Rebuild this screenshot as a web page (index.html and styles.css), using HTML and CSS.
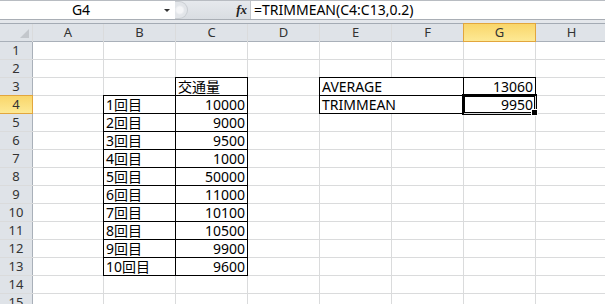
FILE: index.html
```html
<!DOCTYPE html>
<html lang="ja">
<head>
  <meta charset="UTF-8">
  <title>TRIMMEAN</title>
  <link rel="stylesheet" href="styles.css">
</head>
<body>
  <div class="fbar">
    <div class="namebox">G4</div>
    <span class="drop"></span>
    <div class="fx-area">
      <span class="grip"></span>
      <span class="fx">fx</span>
    </div>
    <div class="formula">=TRIMMEAN(C4:C13,0.2)</div>
  </div>
  <div class="strip"></div>

  <div class="sheet">
    <div class="hd corner"></div>
    <div class="hd">A</div><div class="hd">B</div><div class="hd">C</div><div class="hd">D</div>
    <div class="hd">E</div><div class="hd">F</div><div class="hd sel">G</div><div class="hd">H</div>

    <div class="rh">1</div><div class="c"></div><div class="c"></div><div class="c"></div><div class="c"></div><div class="c"></div><div class="c"></div><div class="c"></div><div class="c"></div>
    <div class="rh">2</div><div class="c"></div><div class="c"></div><div class="c"></div><div class="c"></div><div class="c"></div><div class="c"></div><div class="c"></div><div class="c"></div>
    <div class="rh">3</div><div class="c"></div><div class="c"></div><div class="c b">交通量</div><div class="c"></div><div class="c b span2">AVERAGE</div><div class="c b num">13060</div><div class="c"></div>
    <div class="rh sel">4</div><div class="c"></div><div class="c b">1回目</div><div class="c b num">10000</div><div class="c"></div><div class="c b span2">TRIMMEAN</div><div class="c b num active">9950<span class="handle"></span></div><div class="c"></div>
    <div class="rh">5</div><div class="c"></div><div class="c b">2回目</div><div class="c b num">9000</div><div class="c"></div><div class="c"></div><div class="c"></div><div class="c"></div><div class="c"></div>
    <div class="rh">6</div><div class="c"></div><div class="c b">3回目</div><div class="c b num">9500</div><div class="c"></div><div class="c"></div><div class="c"></div><div class="c"></div><div class="c"></div>
    <div class="rh">7</div><div class="c"></div><div class="c b">4回目</div><div class="c b num">1000</div><div class="c"></div><div class="c"></div><div class="c"></div><div class="c"></div><div class="c"></div>
    <div class="rh">8</div><div class="c"></div><div class="c b">5回目</div><div class="c b num">50000</div><div class="c"></div><div class="c"></div><div class="c"></div><div class="c"></div><div class="c"></div>
    <div class="rh">9</div><div class="c"></div><div class="c b">6回目</div><div class="c b num">11000</div><div class="c"></div><div class="c"></div><div class="c"></div><div class="c"></div><div class="c"></div>
    <div class="rh">10</div><div class="c"></div><div class="c b">7回目</div><div class="c b num">10100</div><div class="c"></div><div class="c"></div><div class="c"></div><div class="c"></div><div class="c"></div>
    <div class="rh">11</div><div class="c"></div><div class="c b">8回目</div><div class="c b num">10500</div><div class="c"></div><div class="c"></div><div class="c"></div><div class="c"></div><div class="c"></div>
    <div class="rh">12</div><div class="c"></div><div class="c b">9回目</div><div class="c b num">9900</div><div class="c"></div><div class="c"></div><div class="c"></div><div class="c"></div><div class="c"></div>
    <div class="rh">13</div><div class="c"></div><div class="c b">10回目</div><div class="c b num">9600</div><div class="c"></div><div class="c"></div><div class="c"></div><div class="c"></div><div class="c"></div>
    <div class="rh">14</div><div class="c"></div><div class="c"></div><div class="c"></div><div class="c"></div><div class="c"></div><div class="c"></div><div class="c"></div><div class="c"></div>
    <div class="rh">15</div><div class="c"></div><div class="c"></div><div class="c"></div><div class="c"></div><div class="c"></div><div class="c"></div><div class="c"></div><div class="c"></div>
  </div>
</body>
</html>
```

FILE: styles.css
```css
html, body {
  margin: 0;
  padding: 0;
  overflow: hidden;
  background: #fff;
  font-family: "Noto Sans", "Noto Sans CJK JP", sans-serif;
  color: #000;
}
.fbar {
  display: flex;
  height: 18px;
  border-top: 1px solid #b8bcc2;
  border-bottom: 1px solid #a9aeb5;
  background: #fff;
  font-size: 14px;
  line-height: 18px;
}
.namebox {
  width: 162px;
  text-align: center;
}
.drop {
  width: 0;
  height: 0;
  margin: 8px 6px 0 2px;
  border-left: 3px solid transparent;
  border-right: 3px solid transparent;
  border-top: 3px solid #333;
}
.fx-area {
  width: 74px;
  display: flex;
  justify-content: space-between;
  align-items: center;
  background: linear-gradient(#e6e9ed, #d9dde2);
  border-right: 1px solid #c4c8cd;
}
.grip {
  width: 12px;
  height: 16px;
  margin-left: -1px;
  border: 1px solid #c9cdd2;
  border-left: none;
  border-radius: 0 9px 9px 0;
  background: radial-gradient(circle at 40% 50%, #f4f5f7 3px, #e2e5e9 5px);
}
.fx {
  font-family: "Liberation Serif", serif;
  font-style: italic;
  font-weight: bold;
  font-size: 13px;
  color: #222;
  margin-right: 3px;
}
.formula {
  padding-left: 3px;
}
.strip {
  height: 3px;
  background: #e4e7eb;
  border-bottom: 1px solid #a4abb4;
}
.sheet {
  display: grid;
  grid-template-columns: 32px 70px repeat(7, 71px);
  grid-auto-rows: 17px;
  gap: 1px;
  background: #dadbdc;
  font-size: 14px;
  line-height: 17px;
}
.hd, .rh {
  background: #dfe3e8;
  color: #333;
  font-size: 13px;
  text-align: center;
}
.hd {
  box-shadow: 0 1px 0 #a9b0b9;
}
.rh {
  box-shadow: 1px 0 0 #a9b0b9;
}
.corner {
  position: relative;
}
.corner::after {
  content: "";
  position: absolute;
  right: 3px;
  bottom: 3px;
  border-left: 9px solid transparent;
  border-bottom: 9px solid #c3c7cc;
}
.hd.sel, .rh.sel {
  background: linear-gradient(#f9d66a, #fde995);
  box-shadow: 0 0 0 1px #e2a63d;
  position: relative;
  z-index: 1;
}
.c {
  background: #fff;
  padding: 0 2px;
  white-space: nowrap;
}
.b {
  outline: 1px solid #000;
}
.num {
  text-align: right;
}
.span2 {
  grid-column: span 2;
}
.active {
  position: relative;
  box-shadow: inset 0 0 0 1px #000;
  outline-offset: 1px;
}
.handle {
  position: absolute;
  right: -3px;
  bottom: -3px;
  width: 5px;
  height: 5px;
  background: #000;
  border: 1px solid #fff;
}
```
